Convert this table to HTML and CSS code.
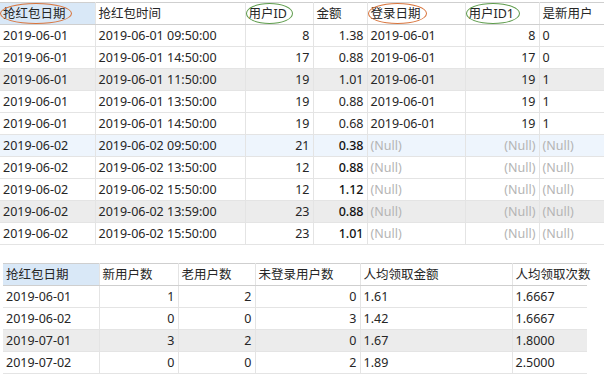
FILE: index.html
```html
<!DOCTYPE html>
<html lang="zh-CN">
<head>
    <meta charset="UTF-8">
    <title>红包数据</title>
    <link rel="stylesheet" href="styles.css">
</head>
<body>
    <table class="grid grid-main">
        <colgroup>
            <col style="width:95px"><col style="width:150px"><col style="width:68px"><col style="width:54px"><col style="width:98px"><col style="width:74px"><col style="width:65px">
        </colgroup>
        <thead>
            <tr>
                <th class="sel"><span class="mark orange">抢红包日期</span></th>
                <th>抢红包时间</th>
                <th><span class="mark green">用户ID</span></th>
                <th>金额</th>
                <th><span class="mark orange">登录日期</span></th>
                <th><span class="mark green">用户ID1</span></th>
                <th>是新用户</th>
            </tr>
        </thead>
        <tbody>
            <tr><td>2019-06-01</td><td>2019-06-01 09:50:00</td><td class="num">8</td><td class="num">1.38</td><td>2019-06-01</td><td class="num">8</td><td>0</td></tr>
            <tr><td>2019-06-01</td><td>2019-06-01 14:50:00</td><td class="num">17</td><td class="num">0.88</td><td>2019-06-01</td><td class="num">17</td><td>0</td></tr>
            <tr class="alt"><td>2019-06-01</td><td>2019-06-01 11:50:00</td><td class="num">19</td><td class="num">1.01</td><td>2019-06-01</td><td class="num">19</td><td>1</td></tr>
            <tr><td>2019-06-01</td><td>2019-06-01 13:50:00</td><td class="num">19</td><td class="num">0.88</td><td>2019-06-01</td><td class="num">19</td><td>1</td></tr>
            <tr><td>2019-06-01</td><td>2019-06-01 14:50:00</td><td class="num">19</td><td class="num">0.68</td><td>2019-06-01</td><td class="num">19</td><td>1</td></tr>
            <tr class="hover"><td>2019-06-02</td><td>2019-06-02 09:50:00</td><td class="num">21</td><td class="num strong">0.38</td><td class="null">(Null)</td><td class="num null">(Null)</td><td class="null">(Null)</td></tr>
            <tr><td>2019-06-02</td><td>2019-06-02 13:50:00</td><td class="num">12</td><td class="num strong">0.88</td><td class="null">(Null)</td><td class="num null">(Null)</td><td class="null">(Null)</td></tr>
            <tr><td>2019-06-02</td><td>2019-06-02 15:50:00</td><td class="num">12</td><td class="num strong">1.12</td><td class="null">(Null)</td><td class="num null">(Null)</td><td class="null">(Null)</td></tr>
            <tr class="alt"><td>2019-06-02</td><td>2019-06-02 13:59:00</td><td class="num">23</td><td class="num strong">0.88</td><td class="null">(Null)</td><td class="num null">(Null)</td><td class="null">(Null)</td></tr>
            <tr><td>2019-06-02</td><td>2019-06-02 15:50:00</td><td class="num">23</td><td class="num strong">1.01</td><td class="null">(Null)</td><td class="num null">(Null)</td><td class="null">(Null)</td></tr>
        </tbody>
    </table>

    <table class="grid grid-summary">
        <colgroup>
            <col style="width:96px"><col style="width:79px"><col style="width:77px"><col style="width:105px"><col style="width:152px"><col style="width:75px">
        </colgroup>
        <thead>
            <tr>
                <th class="sel">抢红包日期</th>
                <th>新用户数</th>
                <th>老用户数</th>
                <th>未登录用户数</th>
                <th>人均领取金额</th>
                <th>人均领取次数</th>
            </tr>
        </thead>
        <tbody>
            <tr><td>2019-06-01</td><td class="num">1</td><td class="num">2</td><td class="num">0</td><td>1.61</td><td>1.6667</td></tr>
            <tr><td>2019-06-02</td><td class="num">0</td><td class="num">0</td><td class="num">3</td><td>1.42</td><td>1.6667</td></tr>
            <tr class="alt"><td>2019-07-01</td><td class="num">3</td><td class="num">2</td><td class="num">0</td><td>1.67</td><td>1.8000</td></tr>
            <tr><td>2019-07-02</td><td class="num">0</td><td class="num">0</td><td class="num">2</td><td>1.89</td><td>2.5000</td></tr>
        </tbody>
    </table>
</body>
</html>
```

FILE: styles.css
```css
:root {
    --text-color: #262626;
    --null-color: #b4b4b4;
    --line-color: #e4e4e4;
    --head-line: #cfcfcf;
    --sel-bg: #d9e8f7;
    --alt-bg: #ececec;
    --hover-bg: #eef5fd;
    --orange: #d8743c;
    --green: #5e9c4c;
}

* {
    margin: 0;
    padding: 0;
    box-sizing: border-box;
}

body {
    background-color: #ffffff;
    color: var(--text-color);
    font-family: 'Noto Sans', 'Noto Sans CJK SC', sans-serif;
    font-size: 12.5px;
    padding-top: 2px;
}

.grid {
    border-collapse: collapse;
    table-layout: fixed;
}

.grid-main {
    width: 604px;
}

.grid-summary {
    width: 584px;
    margin: 18px 0 0 3px;
}

.grid th,
.grid td {
    height: 22px;
    padding: 0 3px;
    border-right: 1px solid var(--line-color);
    border-bottom: 1px solid var(--line-color);
    white-space: nowrap;
    overflow: visible;
    line-height: 21px;
    text-align: left;
}

.grid th {
    font-weight: normal;
    border-top: 1px solid var(--head-line);
    border-bottom-color: var(--head-line);
}

.grid th:last-child,
.grid td:last-child {
    border-right: none;
}

.grid th.sel {
    background-color: var(--sel-bg);
}

.grid td.num {
    text-align: right;
}

.grid td.strong {
    font-weight: 500;
    color: #111111;
}

.grid td.null {
    color: var(--null-color);
}

.grid tr.alt td {
    background-color: var(--alt-bg);
}

.grid tr.hover td {
    background-color: var(--hover-bg);
}

.mark {
    position: relative;
}

.mark::after {
    content: "";
    position: absolute;
    left: -3px;
    right: -6px;
    top: -2px;
    bottom: -2px;
    border: 1px solid;
    border-radius: 50%;
}

.mark.orange::after {
    border-color: var(--orange);
}

.mark.green::after {
    border-color: var(--green);
}
```
